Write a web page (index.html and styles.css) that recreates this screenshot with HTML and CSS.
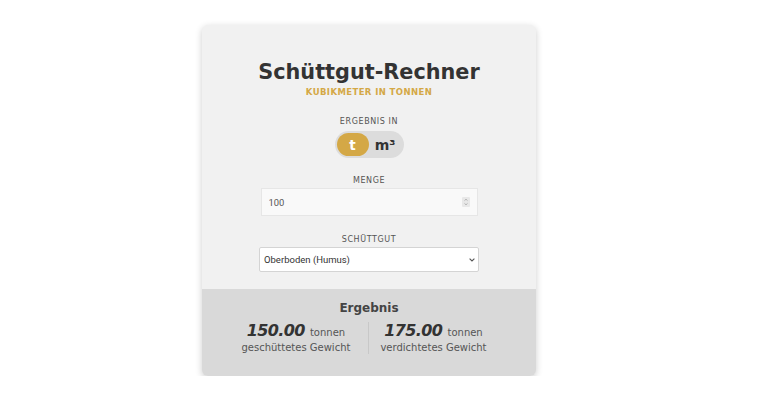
FILE: index.html
```html
<!DOCTYPE html>
<html lang="de">
<head>
<meta charset="utf-8">
<title>Schüttgut-Rechner</title>
<link rel="stylesheet" href="styles.css">
</head>
<body>
<div class="page">
  <div class="card">
    <div class="top">
      <h1 class="title">Schüttgut-Rechner</h1>
      <div class="subtitle">KUBIKMETER IN TONNEN</div>
      <div class="label label-first">ERGEBNIS IN</div>
      <div class="toggle">
        <span class="opt active">t</span>
        <span class="opt">m³</span>
      </div>
      <div class="label">MENGE</div>
      <div class="field">
        <input class="num" type="number" value="100">
        <span class="spin">
          <svg width="8" height="10" viewBox="0 0 8 10">
            <path d="M2.5 3.6 L4 2.2 L5.5 3.6" fill="none" stroke="#999" stroke-width="0.7"/>
            <path d="M2.5 6.4 L4 7.8 L5.5 6.4" fill="none" stroke="#999" stroke-width="0.7"/>
          </svg>
        </span>
      </div>
      <div class="label label-sel">SCHÜTTGUT</div>
      <div class="sel-wrap">
        <select class="sel">
          <option>Oberboden (Humus)</option>
        </select>
        <svg class="chev" width="6" height="4" viewBox="0 0 6 4">
          <path d="M0.6 0.6 L3 3 L5.4 0.6" fill="none" stroke="#555" stroke-width="1.1"/>
        </svg>
      </div>
    </div>
    <div class="result">
      <div class="res-title">Ergebnis</div>
      <div class="res-row">
        <div class="res-col res-left">
          <div class="val"><b>150.00</b> <span class="unit">tonnen</span></div>
          <div class="desc">geschüttetes Gewicht</div>
        </div>
        <div class="divider"></div>
        <div class="res-col res-right">
          <div class="val"><b>175.00</b> <span class="unit">tonnen</span></div>
          <div class="desc">verdichtetes Gewicht</div>
        </div>
      </div>
    </div>
  </div>
</div>
</body>
</html>
```
FILE: styles.css
```css
html, body {
  margin: 0;
  padding: 0;
  background: #ffffff;
}
body {
  font-family: "DejaVu Sans", sans-serif;
  color: #333;
}
.page {
  display: flex;
  padding: 25px 0 0 202px;
}
.card {
  width: 334px;
  height: 351px;
  background: #f1f1f1;
  border-radius: 6px;
  overflow: hidden;
  box-shadow: 0 2px 7px rgba(0,0,0,0.2);
  display: flex;
  flex-direction: column;
}
.top {
  display: flex;
  flex-direction: column;
  align-items: center;
  box-sizing: border-box;
  padding-top: 34px;
  height: 264px;
  flex: none;
}
.title {
  margin: 0;
  font-size: 20.8px;
  line-height: 26px;
  font-weight: 700;
  color: #333;
}
.subtitle {
  margin-top: 1px;
  font-size: 8.5px;
  line-height: 12px;
  font-weight: 700;
  color: #d4a846;
  letter-spacing: 0.4px;
}
.label {
  font-size: 8px;
  line-height: 10px;
  color: #555;
  letter-spacing: 0.6px;
  margin-top: 18px;
  margin-bottom: 2px;
}
.label-first {
  margin-top: 19px;
  margin-bottom: 4px;
}
.label-sel {
  margin-top: 19px;
}
.toggle {
  display: flex;
  align-items: center;
  width: 69px;
  height: 27px;
  box-sizing: border-box;
  padding: 2px;
  border-radius: 14px;
  background: #dcdcdc;
}
.opt {
  width: 32px;
  height: 23px;
  border-radius: 12px;
  display: flex;
  align-items: center;
  justify-content: center;
  font-size: 13.5px;
  font-weight: 700;
  color: #333;
}
.opt.active {
  background: #d4a846;
  color: #fff;
}
.opt + .opt {
  flex: 1;
  font-size: 14px;
}
.field {
  width: 217px;
  position: relative;
}
.num {
  display: block;
  width: 100%;
  height: 28px;
  box-sizing: border-box;
  border: 1px solid #e6e6e6;
  background: #f9f9f9;
  padding: 0 6px 0 7px;
  font-family: Roboto, sans-serif;
  font-size: 9.4px;
  color: #555;
  outline: none;
  -moz-appearance: textfield;
}
.num::-webkit-inner-spin-button,
.num::-webkit-outer-spin-button {
  -webkit-appearance: none;
  margin: 0;
}
.spin {
  position: absolute;
  right: 8px;
  top: 9px;
  width: 8px;
  height: 10px;
  background: #e8e8e8;
  border-radius: 1px;
  display: flex;
}
.sel-wrap {
  width: 220px;
  position: relative;
}
.sel {
  display: block;
  width: 100%;
  height: 25px;
  box-sizing: border-box;
  border: 1px solid #d4d4d4;
  border-radius: 2px;
  background: #fff;
  padding: 0 4px;
  font-family: Roboto, sans-serif;
  font-size: 9.5px;
  color: #333;
  outline: none;
  -webkit-appearance: none;
  appearance: none;
}
.chev {
  position: absolute;
  right: 4px;
  top: 11px;
}
.result {
  flex: 1;
  background: #d9d9d9;
  display: flex;
  flex-direction: column;
  align-items: center;
  padding-top: 11px;
}
.res-title {
  font-size: 12px;
  line-height: 16px;
  font-weight: 700;
  color: #444;
}
.res-row {
  display: flex;
  align-items: stretch;
  margin-top: 6px;
  margin-right: 10px;
}
.res-col {
  display: flex;
  flex-direction: column;
  align-items: center;
}
.res-left {
  padding-right: 18px;
}
.res-right {
  padding-left: 11px;
}
.divider {
  width: 1px;
  background: #c8c8c8;
}
.val {
  font-size: 16px;
  line-height: 18px;
  color: #444;
}
.val b {
  font-size: 16px;
  font-style: italic;
  font-weight: 800;
  letter-spacing: -0.6px;
  color: #333;
}
.unit {
  font-size: 10px;
  color: #555;
}
.desc {
  font-size: 10px;
  line-height: 12px;
  color: #555;
}
```
